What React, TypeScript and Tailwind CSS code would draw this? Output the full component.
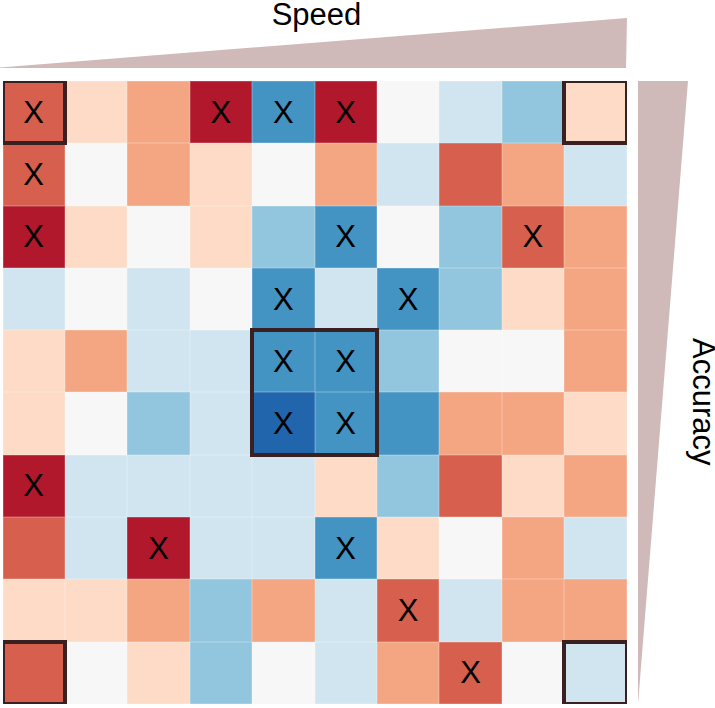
import React from 'react';

// RdBu palette steps used by the matrix
const fills: Record<string, string> = {
  D: 'bg-[#b2182b]',
  R: 'bg-[#d6604d]',
  S: 'bg-[#f4a582]',
  P: 'bg-[#fddbc7]',
  W: 'bg-[#f7f7f7]',
  L: 'bg-[#d1e5f0]',
  M: 'bg-[#92c5de]',
  B: 'bg-[#4393c3]',
  K: 'bg-[#2166ac]',
};

// '*' marks a cell with an X
const rows = [
  'R* P S D* B* D* W L M P',
  'R* W S P W S L R S L',
  'D* P W P M B* W M R* S',
  'L W L W B* L B* M P S',
  'P S L L B* B* M W W S',
  'P W M L K* B* B S S P',
  'D* L L L L P M R P S',
  'R L D* L L B* P W S L',
  'P P S M S L R* L S S',
  'R W P M W L S R* W L',
].map((r) => r.split(' '));

const boxes = [
  'col-start-1 row-start-1',
  'col-start-10 row-start-1',
  'col-start-1 row-start-10',
  'col-start-10 row-start-10',
  'col-start-5 row-start-5 col-span-2 row-span-2',
];

export default function App() {
  return (
    <div className="w-[715px] h-[708px] overflow-hidden bg-white text-black font-['Liberation_Sans',Arial,sans-serif]">
      <div className="w-[627px] pl-[6px] text-center text-[31px] leading-[30px]">Speed</div>
      <svg className="block -mt-[12px]" width="627" height="50" viewBox="0 18 627 50">
        <polygon points="0,67.5 627,18 626,68 0,68" fill="#d0b9b9" />
      </svg>

      <div className="mt-[13px] flex items-start">
        <div className="relative ml-[2.5px] w-[624px] h-[623px] shrink-0 overflow-hidden">
          <div className="grid grid-cols-10 grid-rows-10 w-full h-full">
            {rows.flatMap((row, i) =>
              row.map((c, j) => (
                <div
                  key={`${i}-${j}`}
                  className={`${fills[c[0]]} flex items-center justify-center text-[31px] leading-none shadow-[inset_0_0_0_0.5px_rgba(255,255,255,0.35)]`}
                >
                  {c.endsWith('*') ? 'X' : null}
                </div>
              ))
            )}
          </div>
          <div className="absolute inset-0 grid grid-cols-10 grid-rows-10 pointer-events-none">
            {boxes.map((b) => (
              <div key={b} className={`${b} -m-[2px] border-4 border-[#3b2021]`} />
            ))}
          </div>
        </div>

        <svg className="ml-[11.5px] shrink-0" width="50" height="623" viewBox="0 0 50 623">
          <polygon points="0,0 50,0 0,623" fill="#d0b9b9" />
        </svg>

        <div className="shrink-0 self-stretch pt-[18px] text-center text-[31px] leading-[30px] [writing-mode:vertical-rl]">
          Accuracy
        </div>
      </div>
    </div>
  );
}
